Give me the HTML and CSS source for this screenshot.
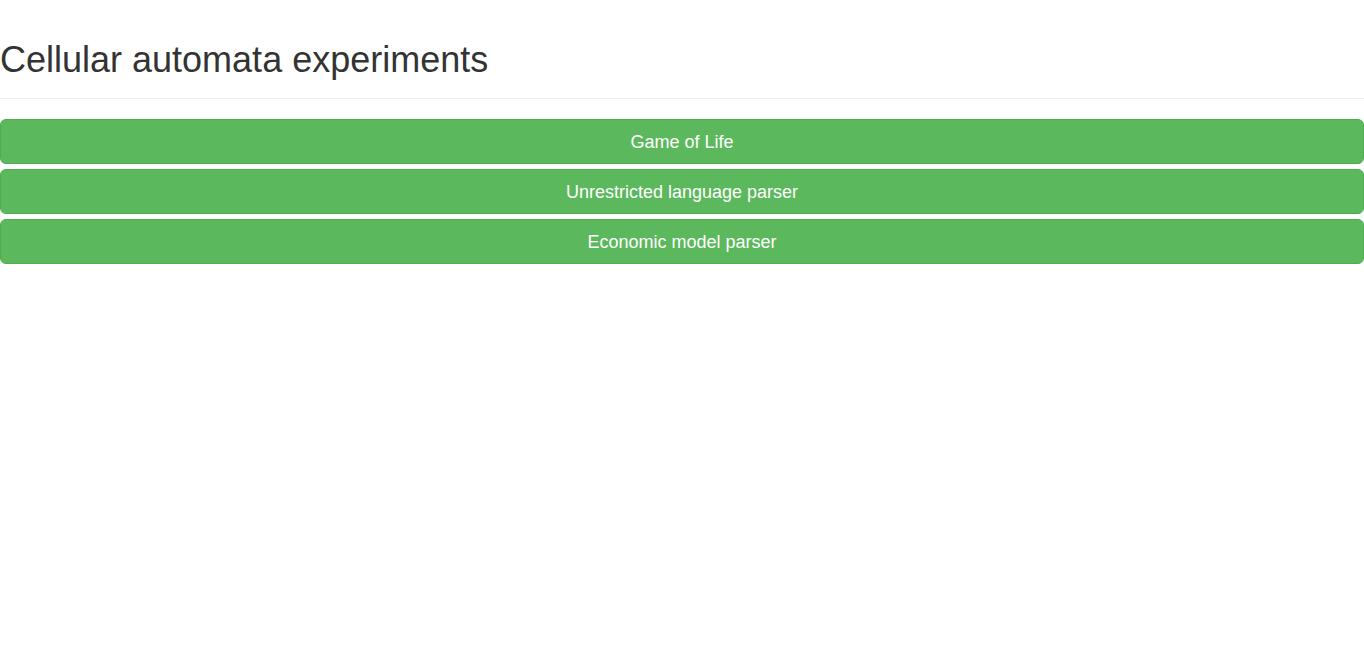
FILE: index.html
```html
<!DOCTYPE html>
<html>
<head>
<meta charset="utf-8">
<title>Cellular automata experiments</title>
<link rel="stylesheet" href="styles.css">
</head>
<body>
<div class="page-header">
  <h1>Cellular automata experiments</h1>
</div>
<div class="buttons">
  <a class="btn">Game of Life</a>
  <a class="btn">Unrestricted language parser</a>
  <a class="btn">Economic model parser</a>
</div>
</body>
</html>
```
FILE: styles.css
```css
html, body {
  margin: 0;
  padding: 0;
  background: #fff;
}
body {
  font-family: "Liberation Sans", Arial, sans-serif;
  font-size: 14px;
  line-height: 1.428571;
  color: #333;
}
.page-header {
  margin: 40px 0 20px;
  padding-bottom: 9px;
  border-bottom: 1px solid #eee;
}
.page-header h1 {
  margin: 0 0 9px;
  font-size: 36px;
  font-weight: 500;
  line-height: 1.1;
  color: #333;
}
.buttons {
  display: flex;
  flex-direction: column;
  gap: 5px;
}
.btn {
  display: block;
  text-align: center;
  padding: 11px 16px 9px;
  font-size: 18px;
  line-height: 23px;
  color: #fff;
  background-color: #5cb85c;
  border: 1px solid #4cae4c;
  border-radius: 6px;
  cursor: pointer;
  user-select: none;
}
```
